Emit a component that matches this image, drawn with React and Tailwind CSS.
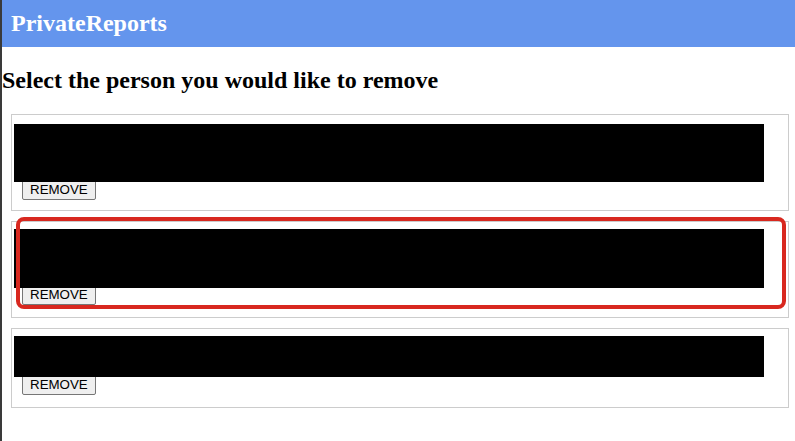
export default function App() {
  const serif = { fontFamily: '"Liberation Serif", "Times New Roman", serif' };
  const sans = { fontFamily: '"Liberation Sans", Arial, sans-serif' };
  const cards = [
    { mt: 'mt-0', pt: 'pt-[9px]', h: 'h-[58px]', ov: '-mt-[3px]', pb: 'pb-[10px]' },
    { mt: 'mt-[10px]', pt: 'pt-[7px]', h: 'h-[59px]', ov: '-mt-[4px]', pb: 'pb-[12px]' },
    { mt: 'mt-[10px]', pt: 'pt-[7px]', h: 'h-[41px]', ov: '-mt-[3px]', pb: 'pb-[12px]' },
  ];
  return (
    <div className="relative w-[795px] h-[441px] bg-white border-l-2 border-[#3a3a3a] overflow-hidden">
      <div className="h-[47px] bg-[#6495ed] flex items-center pl-[9px]">
        <span className="text-white font-bold text-[24px] leading-none pb-[2px]" style={serif}>PrivateReports</span>
      </div>
      <h2 className="mt-[19px] text-black font-bold text-[24px] leading-[28px]" style={serif}>
        Select the person you would like to remove
      </h2>
      <div className="mt-[20px] ml-[9px] mr-[6px]">
        {cards.map((c, i) => (
          <div key={i} className={`${c.mt} border border-[#cccccc] ${c.pt} ${c.pb} pl-[2px] pr-[24px]`}>
            <div className={`relative z-10 bg-black ${c.h}`}></div>
            <button
              className={`block ${c.ov} ml-[8px] h-[21px] px-[7px] text-[13.33px] text-black bg-[#efefef] border border-[#767676] rounded-[2px] leading-none`}
              style={sans}
            >
              REMOVE
            </button>
          </div>
        ))}
      </div>
      <div className="absolute left-[14px] top-[217px] w-[770px] h-[92px] border-[4px] border-[#d8281f] rounded-[8px] z-20 pointer-events-none"></div>
    </div>
  );
}
